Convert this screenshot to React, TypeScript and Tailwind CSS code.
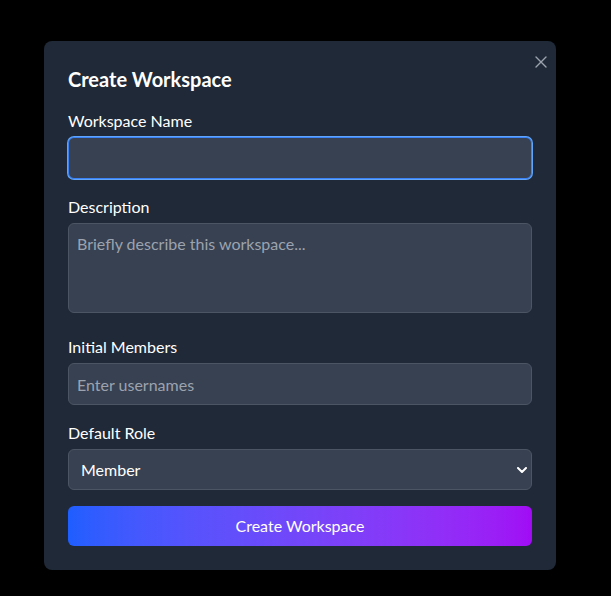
import { useState } from 'react';

export default function App() {
  const [name, setName] = useState('');
  const [desc, setDesc] = useState('');
  const [members, setMembers] = useState('');
  const [role, setRole] = useState('member');

  return (
    <div
      className="min-h-screen w-full bg-black pt-[41px] pl-[44px]"
      style={{ fontFamily: 'Lato, "Open Sans", sans-serif' }}
    >
      <div className="relative w-[512px] rounded-lg bg-[#1f2937] p-6 shadow-xl">
        <button className="absolute right-[8px] top-[14px] flex h-[14px] w-[14px] items-center justify-center text-[#9ca3af]">
          <svg viewBox="0 0 12 12" className="h-[12px] w-[12px]" fill="none" stroke="currentColor" strokeWidth="1.4" strokeLinecap="round">
            <path d="M1 1 L11 11 M11 1 L1 11" />
          </svg>
        </button>

        <h2 className="mb-4 text-xl font-bold leading-7 text-white">Create Workspace</h2>

        <div className="flex flex-col gap-4">
          {/* Name */}
          <div>
            <label className="mb-1 block text-base leading-6 text-white">Workspace Name</label>
            <input
              value={name}
              onChange={e => setName(e.target.value)}
              className="block h-[42px] w-full rounded-md border border-[#3b82f6] bg-[#374151] px-2 text-base text-white outline-none ring-1 ring-[#60a5fa]"
            />
          </div>

          {/* Description */}
          <div>
            <label className="mb-1 block text-base leading-6 text-white">Description</label>
            <textarea
              rows={3}
              value={desc}
              onChange={e => setDesc(e.target.value)}
              placeholder="Briefly describe this workspace..."
              className="block h-[90px] w-full resize-none rounded-md border border-[#4b5563] bg-[#374151] px-2 py-2 text-base leading-6 text-white outline-none placeholder:text-[#9ca3af]"
            />
          </div>

          {/* Members */}
          <div className="mt-[6px]">
            <label className="mb-1 block text-base leading-6 text-white">Initial Members</label>
            <input
              value={members}
              onChange={e => setMembers(e.target.value)}
              placeholder="Enter usernames"
              className="block h-[42px] w-full rounded-md border border-[#4b5563] bg-[#374151] px-2 text-base text-white outline-none placeholder:text-[#9ca3af]"
            />
          </div>

          {/* Role */}
          <div>
            <label className="mb-1 block text-base leading-6 text-white">Default Role</label>
            <div className="relative">
              <select
                value={role}
                onChange={e => setRole(e.target.value)}
                className="block h-[41px] w-full appearance-none rounded-md border border-[#4b5563] bg-[#374151] px-3 text-base text-white outline-none"
              >
                <option value="member">Member</option>
                <option value="admin">Admin</option>
                <option value="viewer">Viewer</option>
              </select>
              <svg
                viewBox="0 0 10 6"
                className="pointer-events-none absolute right-[5px] top-[18px] h-[6px] w-[10px] text-white"
                fill="none"
                stroke="currentColor"
                strokeWidth="2"
                strokeLinecap="round"
                strokeLinejoin="round"
              >
                <path d="M1 1 L5 5 L9 1" />
              </svg>
            </div>
          </div>

          <button className="h-[40px] w-full rounded-md bg-gradient-to-r from-[#1e5eff] to-[#a10bf5] text-base text-white">
            Create Workspace
          </button>
        </div>
      </div>
    </div>
  );
}
